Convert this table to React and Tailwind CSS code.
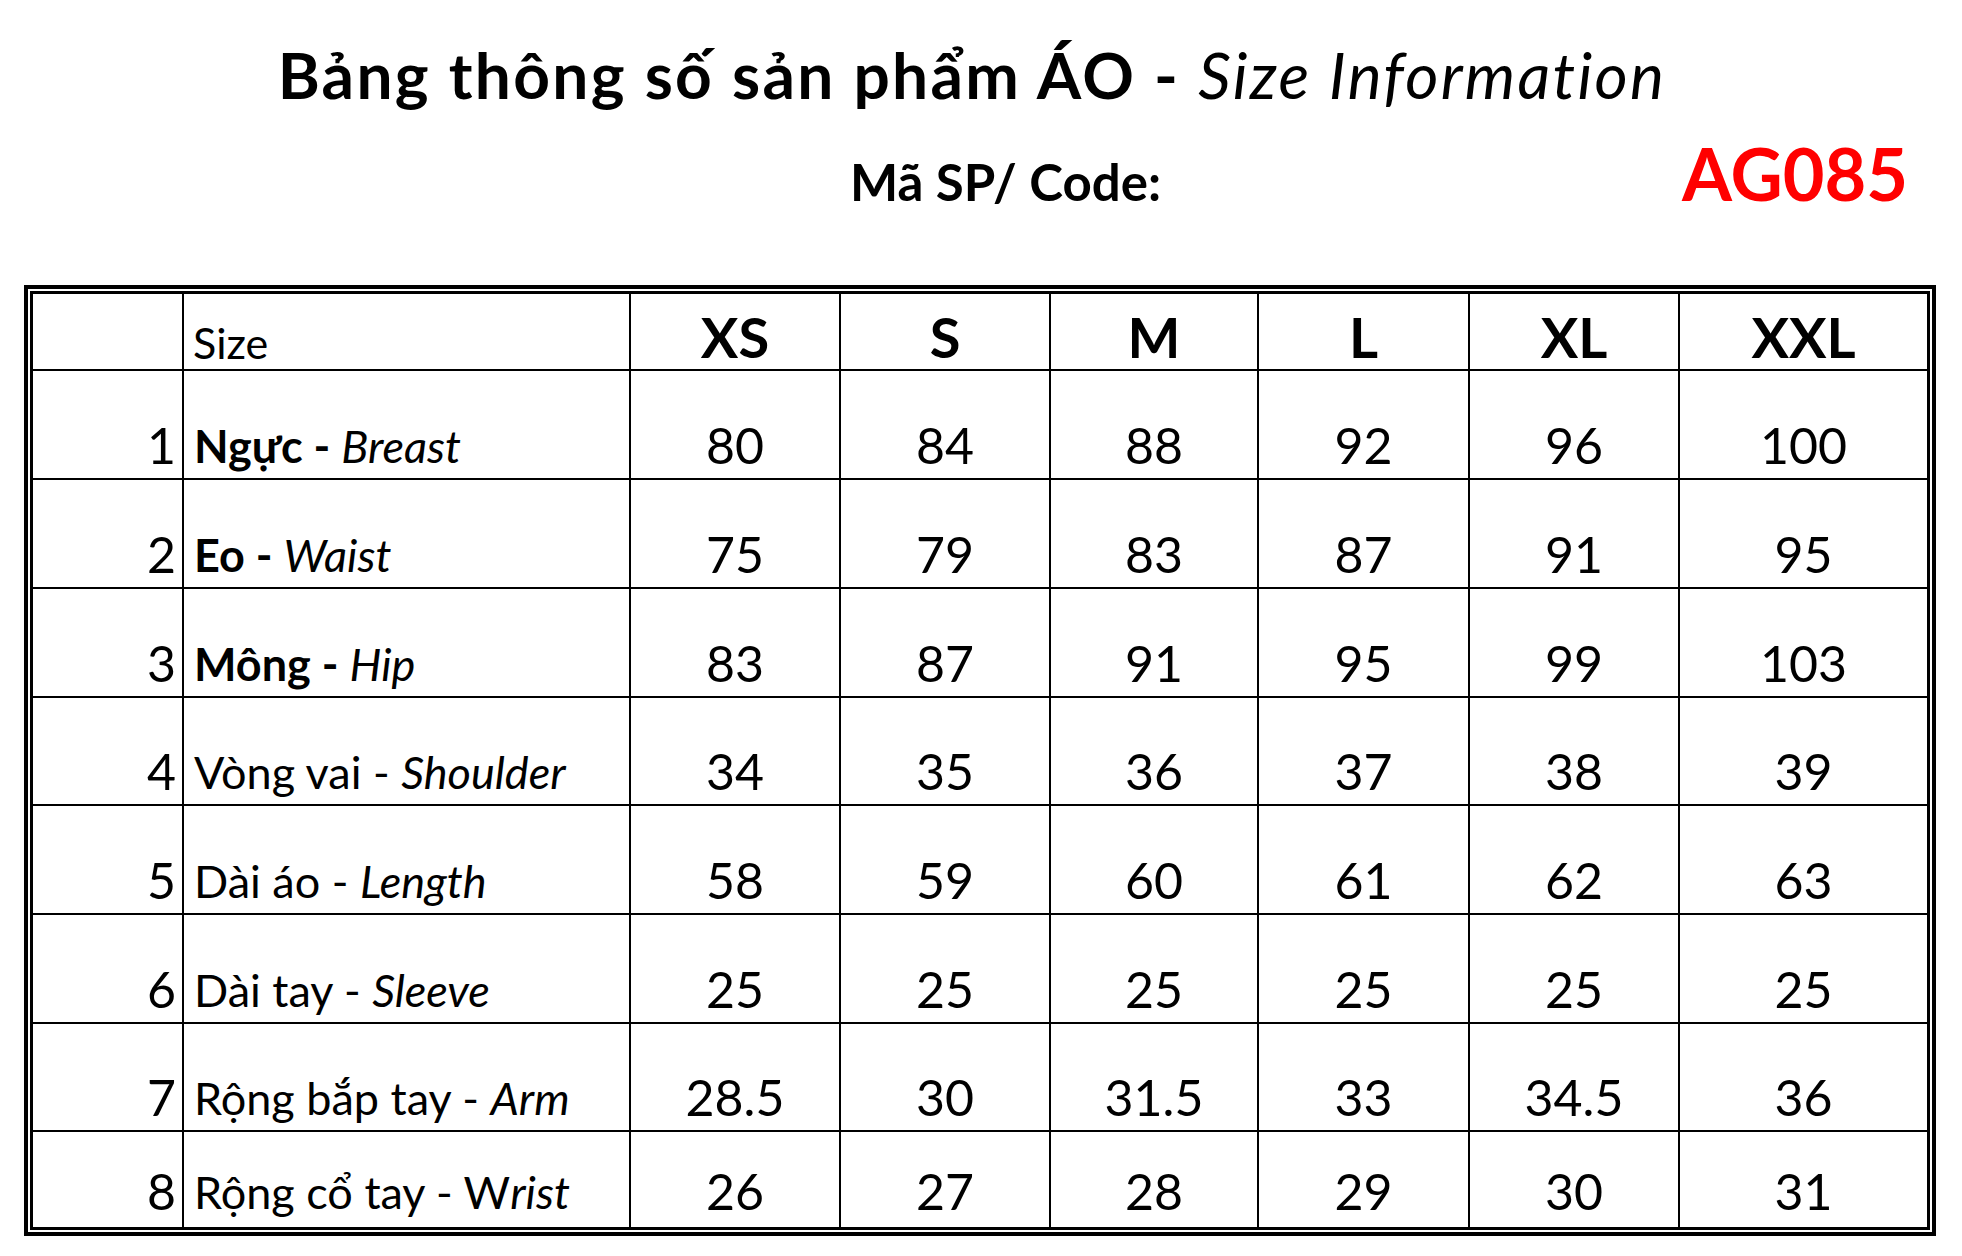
const SIZES = ['XS', 'S', 'M', 'L', 'XL', 'XXL'];

const ROWS = [
  { n: 1, vi: 'Ngực', en: 'Breast', bold: true, values: ['80', '84', '88', '92', '96', '100'] },
  { n: 2, vi: 'Eo', en: 'Waist', bold: true, values: ['75', '79', '83', '87', '91', '95'] },
  { n: 3, vi: 'Mông', en: 'Hip', bold: true, values: ['83', '87', '91', '95', '99', '103'] },
  { n: 4, vi: 'Vòng vai', en: 'Shoulder', values: ['34', '35', '36', '37', '38', '39'] },
  { n: 5, vi: 'Dài áo', en: 'Length', values: ['58', '59', '60', '61', '62', '63'] },
  { n: 6, vi: 'Dài tay', en: 'Sleeve', values: ['25', '25', '25', '25', '25', '25'] },
  { n: 7, vi: 'Rộng bắp tay', en: 'Arm', values: ['28.5', '30', '31.5', '33', '34.5', '36'] },
  { n: 8, vi: 'Rộng cổ tay', en: 'Wrist', values: ['26', '27', '28', '29', '30', '31'], last: true },
];

const Label = ({ row }) => {
  if (row.en === 'Wrist') {
    return (
      <span>
        {row.vi} - W<em>rist</em>
      </span>
    );
  }
  return (
    <span>
      <span className={row.bold ? 'font-bold' : ''}>{row.vi} - </span>
      <em>{row.en}</em>
    </span>
  );
};

export default function App() {
  return (
    <div className="w-[1962px] h-[1256px] bg-white text-black font-[Lato,sans-serif] overflow-hidden">
      {/* heading */}
      <div className="h-[285px]">
        <div className="pt-[43px] pr-[18px] text-center text-[64px] tracking-[2.3px] leading-none">
          <span className="font-bold">Bảng thông số sản phẩm ÁO - </span>
          <em>Size Information</em>
        </div>
        <div className="mt-[30px] flex items-baseline leading-none">
          <span className="pl-[850px] text-[51px] font-bold">Mã SP/ Code:</span>
          <span className="ml-auto pr-[54px] text-[72px] font-bold text-[#ff0000]">AG085</span>
        </div>
      </div>

      {/* size table */}
      <div className="ml-[24px] w-[1912px] border-4 border-black p-[2px]">
        <div className="grid grid-cols-[151px_447px_210px_210px_208px_211px_210px_247px] grid-rows-[77px_109px_109px_109px_108px_109px_109px_108px_95px] border-[3px] border-black">
          <div className="border-r-2 border-b-2 border-black" />
          <div className="flex items-end border-r-2 border-b-2 border-black pl-[9px] pb-[5px] text-[43px] leading-none">
            Size
          </div>
          {SIZES.map((s, i) => (
            <div
              key={s}
              className={`flex items-end justify-center border-b-2 border-black pb-[4px] text-[56px] font-bold leading-none ${i < 5 ? 'border-r-2' : ''}`}
            >
              {s}
            </div>
          ))}

          {ROWS.map((row) => (
            <div key={row.n} className="contents">
              <div
                className={`flex items-end justify-end border-r-2 border-black pr-[6px] text-[50px] leading-none ${row.last ? 'pb-[11px]' : 'border-b-2 pb-[8px]'}`}
              >
                {row.n}
              </div>
              <div
                className={`flex items-end border-r-2 border-black pl-[10px] text-[45px] leading-none whitespace-nowrap ${row.last ? 'pb-[12px]' : 'border-b-2 pb-[9px]'}`}
              >
                <Label row={row} />
              </div>
              {row.values.map((v, i) => (
                <div
                  key={i}
                  className={`flex items-end justify-center border-black text-[50px] leading-none ${i < 5 ? 'border-r-2' : ''} ${row.last ? 'pb-[11px]' : 'border-b-2 pb-[8px]'}`}
                >
                  {v}
                </div>
              ))}
            </div>
          ))}
        </div>
      </div>
    </div>
  );
}
